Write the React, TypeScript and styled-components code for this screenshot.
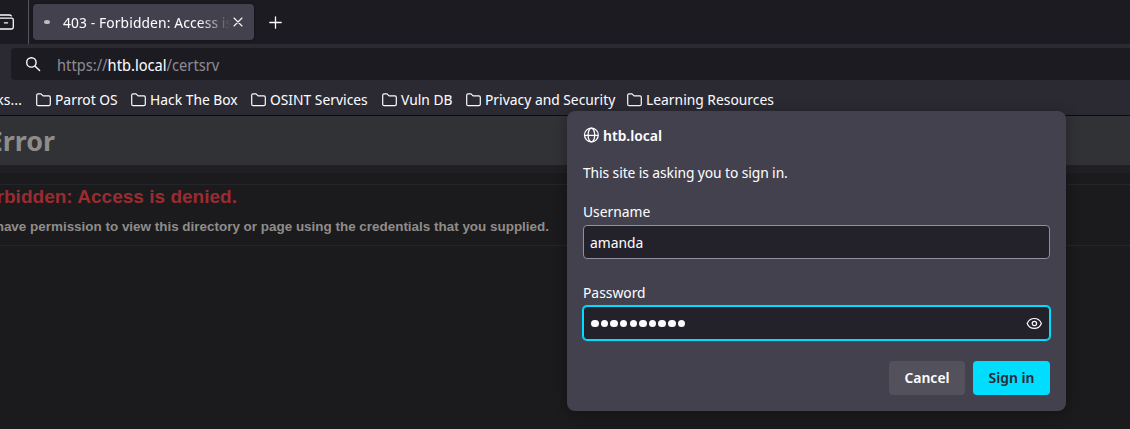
import React from 'react';
import styled, { createGlobalStyle } from 'styled-components';

const Global = createGlobalStyle`
  * { box-sizing: border-box; }
  body { margin: 0; background: #1c1b1d; }
`;

const Browser = styled.div`
  position: relative;
  width: 1130px;
  height: 429px;
  overflow: hidden;
  display: flex;
  flex-direction: column;
  font-family: 'Noto Sans Display', 'Noto Sans', sans-serif;
  font-size: 14.67px;
  line-height: 20px;
  color: #fbfbfe;
  white-space: nowrap;
`;

const TabBar = styled.div`
  display: flex;
  height: 44px;
  background: #1c1b22;
`;

const ViewButton = styled.div`
  width: 29px;
  border-right: 1px solid #56555c;
  padding-top: 13px;
  flex: none;
`;

const Tab = styled.div`
  display: flex;
  align-items: center;
  width: 221px;
  height: 36px;
  margin: 4px 0 0 4px;
  border-radius: 4px;
  background: #42414d;
  box-shadow: 0 0 3px rgba(0, 0, 0, 0.5);
`;

const Loading = styled.span`
  width: 6px;
  height: 4px;
  margin-left: 11px;
  border-radius: 50%;
  background: #bdbdc1;
`;

const TabTitle = styled.span`
  width: 168px;
  margin-left: 13px;
  overflow: hidden;
  letter-spacing: 0.12px;
  mask-image: linear-gradient(to left, transparent, #000 32px);
`;

const CloseIcon = styled.svg`
  flex: none;
  margin-left: 2px;
`;

const NewTab = styled.div`
  margin: 16px 0 0 15px;
  line-height: 0;
`;

const NavBar = styled.div`
  height: 41px;
  padding: 4px 0 5px 11px;
  background: #2b2a33;
`;

const UrlField = styled.div`
  display: flex;
  align-items: center;
  height: 32px;
  padding-left: 14px;
  border-radius: 4px 0 0 4px;
  background: #1c1b22;
  color: #8b8a91;
`;

const Url = styled.span`
  margin: 1px 0 0 16px;
  font-size: 15.5px;
  b { font-weight: 400; color: #fbfbfe; }
`;

const Bookmarks = styled.div`
  display: flex;
  align-items: center;
  height: 31px;
  padding-bottom: 1px;
  border-bottom: 1px solid #0c0c0d;
  background: #2b2a33;
`;

const BookmarkName = styled.span`
  margin-bottom: 2px;
`;

const ClippedBookmark = styled.div`
  display: flex;
  justify-content: flex-end;
  width: 22px;
  margin-right: 14px;
  overflow: hidden;
`;

const Bookmark = styled.div<{ $width: number }>`
  display: flex;
  align-items: center;
  gap: 4px;
  width: ${(p) => p.$width}px;
  flex: none;
  svg { flex: none; }
`;

const Page = styled.main`
  flex: 1;
  background: #1b1b1d;
  font-family: 'Liberation Sans', sans-serif;
  font-weight: 700;
  color: #8f8d8a;
`;

const Header = styled.header`
  display: flex;
  align-items: center;
  height: 57px;
  border-bottom: 8px solid #201f24;
  background: #313236;
`;

const CutLine = styled.div<{ $width: number }>`
  display: flex;
  justify-content: flex-end;
  width: ${(p) => p.$width}px;
`;

const Title = styled.h1`
  margin: 0;
  font: 700 26.88px/36px 'Noto Sans', sans-serif;
`;

const ErrorBox = styled.section`
  height: 62px;
  margin-top: 11px;
  border: solid #24242b;
  border-width: 1px 0;
`;

const Denied = styled.h2`
  margin: 1px 0 0;
  font-size: 19.04px;
  line-height: 22px;
  color: #9a2c31;
`;

const Reason = styled.h3`
  margin: 11px 0 0;
  font-size: 13.44px;
  line-height: 16px;
`;

const Dialog = styled.form`
  position: absolute;
  left: 567px;
  top: 111px;
  width: 499px;
  height: 300px;
  padding: 14px 16px 16px;
  border-radius: 8px;
  background: #42414d;
  box-shadow: 0 2px 14px rgba(0, 0, 0, 0.3);
`;

const Host = styled.div`
  display: flex;
  align-items: center;
  gap: 4px;
  font-weight: 600;
`;

const Message = styled.div`
  margin-top: 17px;
  letter-spacing: -0.09px;
`;

const Label = styled.div<{ $gap: number }>`
  margin-top: ${(p) => p.$gap}px;
`;

const Field = styled.div<{ $focused?: boolean }>`
  display: flex;
  align-items: center;
  justify-content: space-between;
  height: 34px;
  margin-top: 4px;
  padding: 0 7px 0 6px;
  border: 1px solid ${(p) => (p.$focused ? '#00ddff' : '#8f8f9d')};
  border-radius: 4px;
  background: #23222b;
  box-shadow: ${(p) => (p.$focused ? '0 0 0 1px #00ddff' : 'none')};
`;

const Dots = styled.span`
  display: flex;
  gap: 2.13px;
  padding: 1px 0 0 1px;
`;

const Dot = styled.i`
  width: 7.5px;
  height: 7.5px;
  border-radius: 50%;
  background: #fbfbfe;
`;

const Actions = styled.div`
  display: flex;
  justify-content: flex-end;
  gap: 8px;
  margin-top: 21px;
`;

const Button = styled.button<{ $primary?: boolean }>`
  width: ${(p) => (p.$primary ? 77 : 76)}px;
  height: 34px;
  padding: 0 0 2px;
  border: 0;
  border-radius: 4px;
  background: ${(p) => (p.$primary ? '#00ddff' : '#52515c')};
  color: ${(p) => (p.$primary ? '#2b2a33' : '#fbfbfe')};
  font: 600 14.67px/20px 'Noto Sans Display', 'Noto Sans', sans-serif;
`;

const folders: [string, number][] = [
  ['Parrot OS', 95],
  ['Hack The Box', 120],
  ['OSINT Services', 131],
  ['Vuln DB', 84],
  ['Privacy and Security', 161],
  ['Learning Resources', 150],
];

const Folder = () => (
  <svg width="15" height="14" viewBox="0 0 15 14" fill="none" stroke="#fbfbfe" strokeWidth="1.2" strokeLinejoin="round">
    <path d="M.7 11.2V2.2Q.7.8 2.1.8H5L7.1 2.9H12.9Q14.3 2.9 14.3 4.3V11.2Q14.3 12.6 12.9 12.6H2.1Q.7 12.6 .7 11.2Z" />
  </svg>
);

export default function App() {
  return (
    <Browser>
      <Global />
      <TabBar>
        <ViewButton>
          <svg width="15" height="18" viewBox="0 0 15 18" fill="none" stroke="#fbfbfe" strokeWidth="1.3" strokeLinecap="round">
            <path d="M-1 5.2H11.6Q13.3 5.2 13.3 6.9V14.3Q13.3 16 11.6 16H-1M-1 2H9.3Q10.6 2 11.3 2.9M4.4 9.8H7.6" />
          </svg>
        </ViewButton>
        <Tab>
          <Loading />
          <TabTitle>403 - Forbidden: Access is denied.</TabTitle>
          <CloseIcon width="10" height="10" viewBox="0 0 10 10" stroke="#fbfbfe" strokeWidth="1.1" strokeLinecap="round">
            <path d="M1 1L9 9M9 1L1 9" />
          </CloseIcon>
        </Tab>
        <NewTab>
          <svg width="13" height="13" viewBox="0 0 13 13" stroke="#fbfbfe" strokeWidth="1.3" strokeLinecap="round">
            <path d="M6.5 .8V12.2M.8 6.5H12.2" />
          </svg>
        </NewTab>
      </TabBar>
      <NavBar>
        <UrlField>
          <svg width="16" height="16" viewBox="0 0 16 16" fill="none" stroke="#fbfbfe" strokeWidth="1.4" strokeLinecap="round">
            <circle cx="6.4" cy="6.4" r="4.7" />
            <path d="M9.9 9.9L14.6 14.6" />
          </svg>
          <Url>https://<b>htb.local</b>/certsrv</Url>
        </UrlField>
      </NavBar>
      <Bookmarks>
        <ClippedBookmark><BookmarkName>Import bookmarks…</BookmarkName></ClippedBookmark>
        {folders.map(([name, width]) => (
          <Bookmark key={name} $width={width}>
            <Folder />
            <BookmarkName>{name}</BookmarkName>
          </Bookmark>
        ))}
      </Bookmarks>
      <Page>
        <Header>
          <CutLine $width={55}><Title>Server Error</Title></CutLine>
        </Header>
        <ErrorBox>
          <CutLine $width={237}><Denied>403 - Forbidden: Access is denied.</Denied></CutLine>
          <CutLine $width={549}>
            <Reason>You do not have permission to view this directory or page using the credentials that you supplied.</Reason>
          </CutLine>
        </ErrorBox>
      </Page>
      <Dialog>
        <Host>
          <svg width="16" height="16" viewBox="0 0 16 16" fill="none" stroke="#fbfbfe" strokeWidth="1.3">
            <circle cx="8.4" cy="8" r="6.9" />
            <ellipse cx="8.4" cy="8" rx="3.3" ry="6.9" />
            <path d="M1.5 8.4H15.3" />
          </svg>
          htb.local
        </Host>
        <Message>This site is asking you to sign in.</Message>
        <Label $gap={19}>Username</Label>
        <Field>amanda</Field>
        <Label $gap={23}>Password</Label>
        <Field $focused>
          <Dots>{Array.from({ length: 10 }, (_, i) => <Dot key={i} />)}</Dots>
          <svg width="16" height="14" viewBox="0 0 16 14" fill="none" stroke="#fbfbfe" strokeWidth="1.2">
            <path d="M1.2 7.5C2.5 4.3 5.2 2.5 8.4 2.5S14.1 4.3 15.4 7.5C14.1 10.7 11.6 12.4 8.4 12.4S2.5 10.7 1.2 7.5Z" />
            <circle cx="8.4" cy="7.5" r="2.2" />
          </svg>
        </Field>
        <Actions>
          <Button type="button">Cancel</Button>
          <Button type="button" $primary>Sign in</Button>
        </Actions>
      </Dialog>
    </Browser>
  );
}
